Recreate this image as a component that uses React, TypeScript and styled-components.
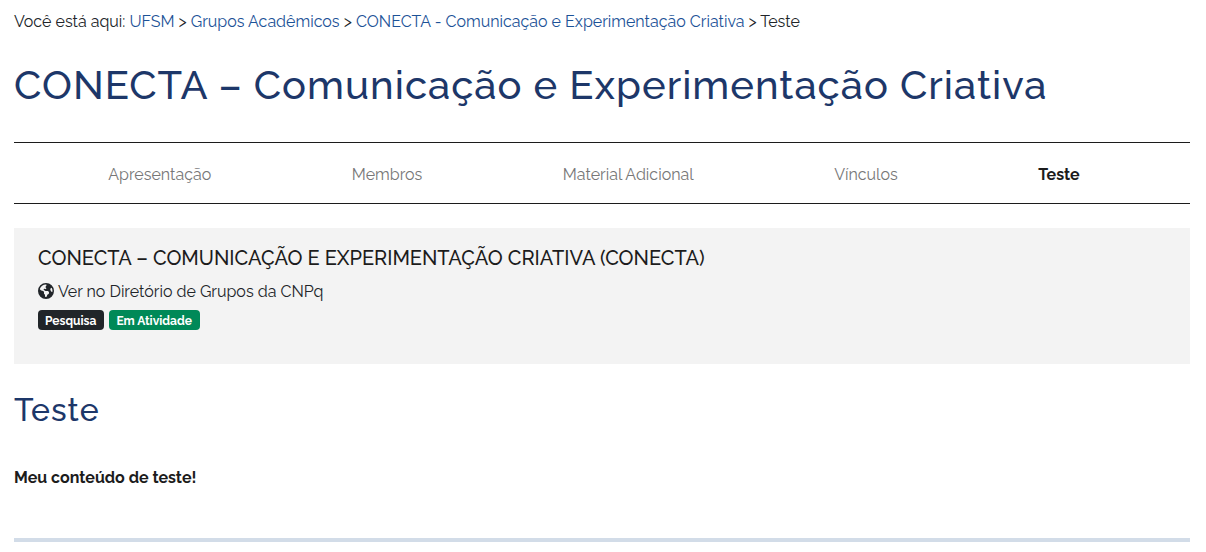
import React from "react";
import styled, { createGlobalStyle } from "styled-components";
import { FaEarthAmericas } from "react-icons/fa6";

const GlobalStyle = createGlobalStyle`
  *, *::before, *::after { box-sizing: border-box; }
  body {
    margin: 0;
    background: #fff;
    color: #212529;
    font-family: Raleway, Lato, "Open Sans", sans-serif;
    font-size: 16px;
    line-height: 24px;
  }
`;

const Page = styled.div`
  padding: 10px 16px 10px 14px;
`;

const Breadcrumb = styled.nav`
  a { color: #1c5297; text-decoration: none; }
`;

const Title = styled.h1`
  margin: 27px 0 33px;
  color: #1d3769;
  font-size: 40px;
  font-weight: 500;
  line-height: 48px;
  letter-spacing: 1px;
`;

const Tabs = styled.nav`
  display: flex;
  justify-content: space-around;
  padding: 20px 40px 16px 24px;
  border-top: 1px solid #1c1c1c;
  border-bottom: 1px solid #1c1c1c;
`;

const Tab = styled.a<{ $active?: boolean }>`
  color: ${(p) => (p.$active ? "#1c1c1c" : "#777")};
  font-weight: ${(p) => (p.$active ? 700 : 400)};
  text-decoration: none;
`;

const Card = styled.section`
  margin-top: 24px;
  padding: 16px 24px 34px;
  background: #f3f3f3;
`;

const CardTitle = styled.h2`
  margin: 0 0 8px;
  color: #1c1c1c;
  font-size: 20px;
  font-weight: 500;
  line-height: 28px;
`;

const DirectoryLink = styled.a`
  display: inline-flex;
  align-items: center;
  gap: 4px;
  vertical-align: top;
  color: inherit;
  text-decoration: none;

  svg { margin-bottom: 2px; }
`;

const Badges = styled.div`
  display: flex;
  gap: 5px;
  margin-top: 6px;
`;

const Badge = styled.span<{ $color: string }>`
  padding: 5px 8px 3px 7px;
  border-radius: 4px;
  background: ${(p) => p.$color};
  color: #fff;
  font-size: 12px;
  font-weight: 700;
  line-height: 12px;
`;

const SectionTitle = styled.h2`
  margin: 27px 0 37px;
  color: #1d3769;
  font-size: 32px;
  font-weight: 500;
  line-height: 38px;
  letter-spacing: 1px;
`;

const Content = styled.p`
  margin: 0 0 48px;
  color: #1c1c1c;
  font-weight: 700;
`;

const Rule = styled.hr`
  height: 4px;
  margin: 0;
  border: 0;
  background: #d2dce8;
`;

export default function App() {
  return (
    <>
      <GlobalStyle />
      <Page>
        <Breadcrumb aria-label="Você está aqui">
          Você está aqui: <a href="#ufsm">UFSM</a> &gt; <a href="#grupos">Grupos Acadêmicos</a> &gt;{" "}
          <a href="#conecta">CONECTA - Comunicação e Experimentação Criativa</a> &gt; Teste
        </Breadcrumb>
        <Title>CONECTA – Comunicação e Experimentação Criativa</Title>
        <Tabs>
          <Tab href="#apresentacao">Apresentação</Tab>
          <Tab href="#membros">Membros</Tab>
          <Tab href="#material">Material Adicional</Tab>
          <Tab href="#vinculos">Vínculos</Tab>
          <Tab href="#teste" $active aria-current="page">Teste</Tab>
        </Tabs>
        <Card>
          <CardTitle>CONECTA – COMUNICAÇÃO E EXPERIMENTAÇÃO CRIATIVA (CONECTA)</CardTitle>
          <DirectoryLink href="#cnpq">
            <FaEarthAmericas size={16} aria-hidden="true" />
            Ver no Diretório de Grupos da CNPq
          </DirectoryLink>
          <Badges>
            <Badge $color="#212529">Pesquisa</Badge>
            <Badge $color="#008958">Em Atividade</Badge>
          </Badges>
        </Card>
        <SectionTitle>Teste</SectionTitle>
        <Content>Meu conteúdo de teste!</Content>
        <Rule />
      </Page>
    </>
  );
}
